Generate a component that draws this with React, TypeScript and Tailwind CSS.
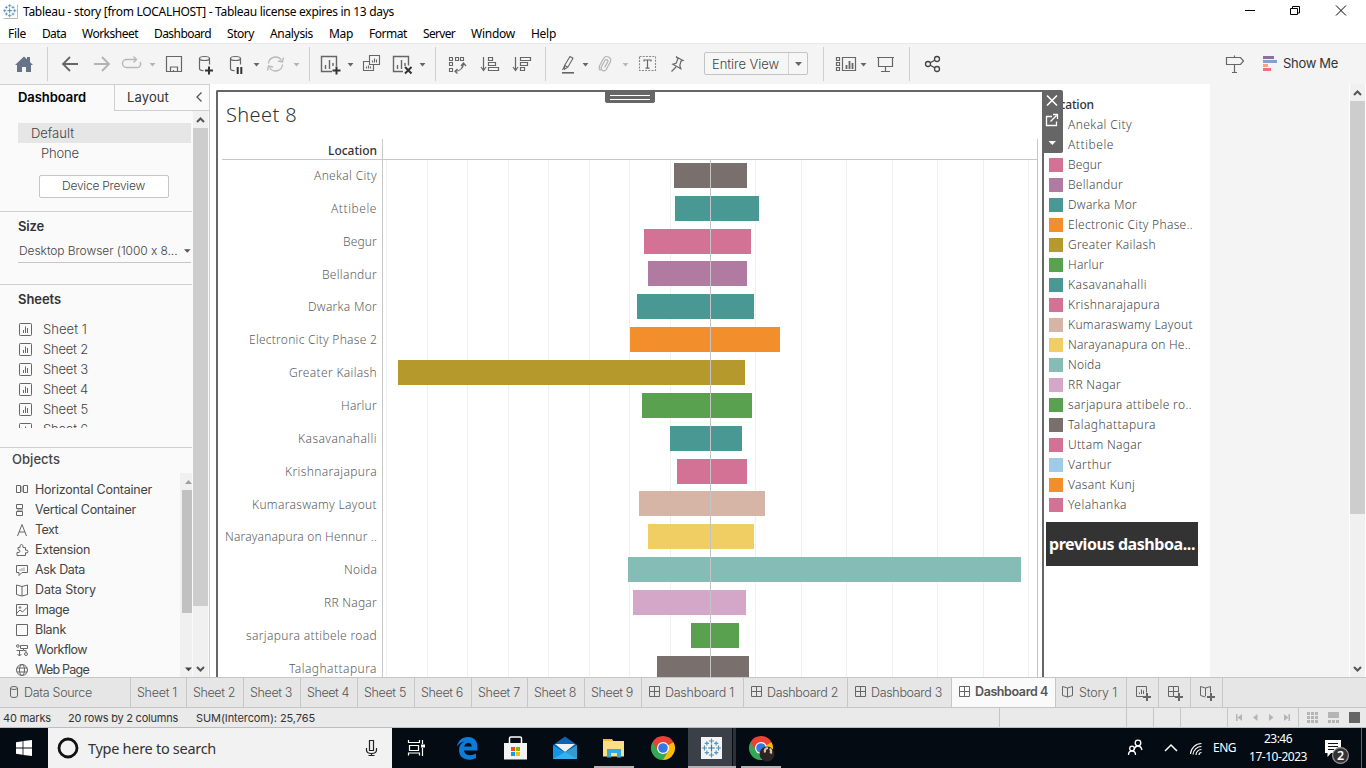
import React, { useLayoutEffect, useRef } from "react";

/* Text set to a known advance width by spreading the letter spacing. */
function Fit({ w, className = "", children }: { w: number; className?: string; children: string }) {
  const ref = useRef<HTMLSpanElement>(null);
  useLayoutEffect(() => {
    const el = ref.current;
    if (!el) return;
    el.style.letterSpacing = "0px";
    const natural = el.getBoundingClientRect().width;
    el.style.letterSpacing = `${(w - natural) / children.length}px`;
  }, [w, children]);
  return (
    <span ref={ref} className={`inline-block shrink-0 whitespace-pre ${className}`}>
      {children}
    </span>
  );
}

/* One strip cell: spans x1..x2 of a bar that starts at y and is h tall. */
function Cell({ x1, x2, y, h, children }: { x1: number; x2: number; y: number; h: number; children?: React.ReactNode }) {
  return (
    <svg className="block shrink-0" width={x2 - x1} height={h} viewBox={`${x1} ${y} ${x2 - x1} ${h}`} fill="none" stroke="#666" strokeWidth="1.4">
      {children}
    </svg>
  );
}

const Tool = (p: { x1: number; x2: number; children?: React.ReactNode }) => (
  <Cell x1={p.x1} x2={p.x2} y={44} h={40}>{p.children}</Cell>
);
const Caret = ({ x, y = 63, c = "#666" }: { x: number; y?: number; c?: string }) => (
  <path d={`M${x - 3} ${y}h6l-3 3.4z`} fill={c} stroke="none" />
);
const Sep = ({ x }: { x: number }) => <path d={`M${x + 0.5} 47V81`} stroke="#cfcfcf" strokeWidth="1" />;

const menus: [string, number][] = [
  ["File", 18], ["Data", 24], ["Worksheet", 56], ["Dashboard", 57], ["Story", 27], ["Analysis", 43],
  ["Map", 24], ["Format", 38], ["Server", 32], ["Window", 44], ["Help", 25],
];

function TableauMark({ x, y, s }: { x: number; y: number; s: number }) {
  const pts = [[0, 0, 2.6], [0, -5.4, 1.9], [0, 5.4, 1.9], [-5.4, 0, 1.9], [5.4, 0, 1.9], [-3.6, -3.6, 1.6], [3.6, -3.6, 1.6], [-3.6, 3.6, 1.6], [3.6, 3.6, 1.6]];
  return (
    <g transform={`translate(${x} ${y}) scale(${s})`} stroke="#2f7ba8" strokeWidth=".9">
      {pts.map(([a, b, r], i) => <path key={i} d={`M${a - r} ${b}h${2 * r}M${a} ${b - r}v${2 * r}`} opacity={i === 0 ? 1 : 0.8} />)}
    </g>
  );
}

function TopBars() {
  return (
    <>
      <div className="flex h-[22px] items-center bg-white">
        <Cell x1={0} x2={23} y={0} h={22}>
          <path d="M3.5 18.5h14V4.5" stroke="#bbb" strokeWidth="1" />
          <TableauMark x={9.7} y={10.7} s={0.92} />
        </Cell>
        <Fit w={371} className="pt-px text-[12px] leading-[22px] text-black">Tableau - story [from LOCALHOST] - Tableau license expires in 13 days</Fit>
        <div className="flex-1" />
        <Cell x1={1236} x2={1366} y={0} h={22}>
          <path d="M1245 10.5h10M1290.5 8.5h7v6h-7zM1292.5 8V6.5h7v6.5h-2M1336 5.5l10 10M1346 5.5l-10 10" stroke="#000" strokeWidth="1" />
        </Cell>
      </div>
      <div className="flex h-[21px] items-center gap-4 bg-white pl-2 pt-[3px] text-[12px] leading-[20px] text-black">
        {menus.map(([m, w]) => <Fit key={m} w={w}>{m}</Fit>)}
      </div>
      <div className="flex h-[41px] border-t border-[#e9e9e9] bg-[#f4f4f4] font-['Inter',sans-serif]">
        <Tool x1={0} x2={56}>
          <path d="M15 65l9-8.5 3 2.8V57h3v5l3 3h-2v7h-5v-5h-4v5h-5v-7z" fill="#677487" stroke="none" />
          <Sep x={47} />
        </Tool>
        <Tool x1={56} x2={160}>
          <path d="M78 64H63M70 57l-7 7 7 7" strokeWidth="1.8" />
          <path d="M94 64h15M102 57l7 7-7 7" stroke="#b3b3b3" strokeWidth="1.8" />
          <path d="M127 59.500h-.500a3.500 3.500 0 0 0 0 8h10a3.500 3.500 0 0 0 3.500-5.500M127 59.500h9.500M133.500 56.500l3 3-3 3" stroke="#b8b8b8" />
          <Caret x={152.500} c="#b3b3b3" />
        </Tool>
        <Tool x1={160} x2={309}>
          <path d="M166.500 56.500h15v15h-15zM170.500 71v-4h7v4M173.500 70v1.500" strokeWidth="1.200" />
          <g strokeWidth="1.200">
            <ellipse cx="204.500" cy="58.500" rx="5" ry="2" /><path d="M199.500 58.500v10q0 2 4 2.200M209.500 58.500v6" />
            <path d="M205 70.500h8M209 66.500v8" stroke="#333" strokeWidth="2" />
            <ellipse cx="235.500" cy="58.500" rx="5" ry="2" /><path d="M230.500 58.500v10q0 2 4 2.200M240.500 58.500v6" />
            <path d="M237.700 67v7M241.300 67v7" stroke="#333" strokeWidth="2" />
          </g>
          <Caret x={256.500} />
          <path d="M268.500 63.500a7 7 0 0 1 13-3M282.500 64.500a7 7 0 0 1-13 3M283.500 57.500l-1 4.500-4.500-1M267.500 70.500l1-4.500 4.500 1" stroke="#b8b8b8" strokeWidth="1.300" />
          <Caret x={296.500} c="#b3b3b3" />
        </Tool>
        <Tool x1={309} x2={441}>
          <Sep x={309} />
          <path d="M332 71.500h-10.500v-15h15v9.500M325.500 69v-4M329.500 69v-9M333 66v-3" />
          <path d="M332.500 70.500h8M336.500 66.500v8" stroke="#333" strokeWidth="2" />
          <Caret x={350.500} />
          <path d="M369.500 55.500h10v9h-10zM369 61.500h-5.500v9h10v-6M372.500 62.500v-2M374.500 62.500v-4M376.500 62.500v-3M366.500 68.500v-2M368.500 68.500v-3M370.500 68.500v-2" strokeWidth="1.100" />
          <path d="M403 71.500h-9.500v-15h15v9M397.500 69v-4M401.500 69v-9M405 66v-3" />
          <path d="M405 67l6.500 6.500M411.500 67l-6.500 6.500" stroke="#333" strokeWidth="2" />
          <Caret x={422.500} /><Sep x={435} />
        </Tool>
        <Tool x1={441} x2={551}>
          <path d="M449.500 57.500h3v3h-3zM455.500 57.500h3v3h-3zM460.500 57.500h3v3h-3zM449.500 62.500h3v3h-3zM449.500 68.500h3v3h-3z" strokeWidth="1.100" />
          <path d="M455 71.500q8-1 8.500-8M461 66l2.500-3 2.500 3M457.500 69l-2.500 2.500 2.500 2" strokeWidth="1.200" />
          <path d="M483.500 57v13M481 67l2.500 3.500L486 67M488.500 57.500h4v3h-4zM488.500 62.500h7v3h-7zM488.500 67.500h10v3h-10z" strokeWidth="1.200" />
          <path d="M515.500 57v13M513 67l2.500 3.500L518 67M520.500 57.500h10v3h-10zM520.500 62.500h7v3h-7zM520.500 67.500h4v3h-4z" strokeWidth="1.200" />
          <Sep x={545} />
        </Tool>
        <Tool x1={551} x2={704}>
          <path d="M564.500 65.500l5.500-9 3 1.700-5.200 9-3.300 2zM562.500 70l2-4M565 65.500l3 2" strokeWidth="1.100" /><path d="M562 72.800h12" strokeWidth="1.600" />
          <Caret x={585.500} />
          <path d="M599.500 66l4-7.500q1.800-3 5-1.500t1.800 5l-4 7.500q-1.400 2.200-3.700 1t-1.200-3.500l3.500-6.500q.8-1.300 2.200-.6t.6 2l-3 5.500M599.500 66q-1 3 1 4.500" stroke="#b3b3b3" strokeWidth="1.200" />
          <Caret x={625.500} c="#b8b8b8" />
          <path d="M639.500 56.500h16v14h-16z" strokeDasharray="2 1.200" strokeWidth="1.100" stroke="#888" />
          <path d="M644 61.500v-1.500h7v1.500M647.500 60v8M645.500 68.200h4" strokeWidth="1.200" />
          <path d="M676 56.800l7 3.700-2 .5-1.200 4.500 1 3.200-8-4.500 3.300-1 1.900-4.700zM676 67l-4.500 4.500" strokeWidth="1.200" />
        </Tool>
        <div className="mt-2 flex h-[23px] w-[104px] shrink-0 rounded-[2px] border border-[#c3c3c3] bg-[#f6f6f6]">
          <div className="flex w-[84px] items-center border-r border-[#d4d4d4] pl-[7px]">
            <Fit w={67} className="text-[13px] font-light leading-[20px] text-[#444]">Entire View</Fit>
          </div>
          <svg width="18" height="21" viewBox="0 0 18 21"><path d="M6 9h7l-3.500 4z" fill="#666" /></svg>
        </div>
        <Tool x1={808} x2={950}>
          <Sep x={823} />
          <path d="M836.500 57.500h3v3h-3zM836.500 62.500h3v3h-3zM836.500 67.500h3v3h-3zM842.500 57.500h13v13h-13z" strokeWidth="1.200" />
          <path d="M846.500 69v-4M849.500 69v-8M852.500 69v-6" strokeWidth="1.800" />
          <Caret x={863.500} />
          <path d="M877 57.500h17M878.500 58v8.500h14V58M885.500 67v4M881 71.500h9" strokeWidth="1.200" />
          <Sep x={909} />
          <g stroke="#444" strokeWidth="1.300"><circle cx="928" cy="64" r="2.500" /><circle cx="937" cy="59" r="2.500" /><circle cx="937" cy="69" r="2.500" /><path d="M930.200 62.800l4.600-2.600M930.200 65.200l4.600 2.600" /></g>
        </Tool>
        <div className="flex-1" />
        <Tool x1={1216} x2={1283}>
          <path d="M1226.500 57.500h14l3 3.500-3 3.500h-14zM1234.500 55.500v2M1234.500 64.500v8M1232 72.500h5" strokeWidth="1.200" />
          <g stroke="none"><path fill="#8c6f9c" d="M1263 56h11v3h-11z" /><path fill="#7fa3cd" d="M1263 60h14v3h-14z" /><path fill="#f1a57d" d="M1263 64h5v3h-5z" /><path fill="#f96a7a" d="M1263 68h8v3h-8z" /></g>
        </Tool>
        <Fit w={55} className="mr-[28px] text-[13px] leading-[38px] text-[#333]">Show Me</Fit>
      </div>
    </>
  );
}

const objects: [string, number, React.ReactNode][] = [
  ["Horizontal Container", 117, <><path d="M.5 1.500h4v7h-4zM7.500 1.500h4v7h-4z" /><path d="M5 2h2v6H5z" fill="#bbb" stroke="none" /></>],
  ["Vertical Container", 101, <><path d="M.5.500h6v4h-6zM.5 7.500h6v4h-6z" /><path d="M1 5h6v2H1z" fill="#bbb" stroke="none" /></>],
  ["Text", 23, <path d="M1.500 12L6 .5 10.500 12M3 8h6" />],
  ["Extension", 55, <path d="M3.500 11.500h6V8.800q2.500.8 2.500-1.300T9.500 6.200V3.500H7Q7.500.5 5.500.5T4 3.500H2v2.200q2-.2 2 1.500T1 8.500v3z" />],
  ["Ask Data", 50, <><path d="M.5 1.500h11v7H6l-3 3v-3H.5z" /><path d="M4 7V5M6 7V4M8 7V3.500" stroke="#999" /></>],
  ["Data Story", 61, <path d="M6 2.500L.5 1v9.500L6 12l5.500-1.500V1L6 2.500V12" />],
  ["Image", 34, <><path d="M.5.500h11v11H.5zM1 9l3-3 2.500 2L11 3.500" /><circle cx="4" cy="3.500" r=".8" /></>],
  ["Blank", 31, <path d="M.5.500h11v11H.5z" />],
  ["Workflow", 52, <><circle cx="1.800" cy="2" r="1.300" /><circle cx="10" cy="10" r="1.500" /><path d="M4.500 1.500h7v3h-7zM.5 6.500h7v-2M3.500 6.500v5.500M1.500 10l2 2 2-2M10 8V6.500H8" /></>],
  ["Web Page", 54, <><circle cx="6" cy="6" r="5.500" /><ellipse cx="6" cy="6" rx="2.500" ry="5.500" /><path d="M1 4h10M1 8h10" /></>],
];

function Sidebar() {
  return (
    <div className="flex h-full w-[210px] shrink-0 flex-col border-r border-t border-[#cfcfcf] bg-[#fafafa] font-['Inter',sans-serif] text-[#444]">
      <div className="flex h-[26px] shrink-0">
        <div className="w-[114px] pl-[18px] leading-[23px]"><Fit w={68} className="text-[13px] font-semibold leading-[23px] text-black">Dashboard</Fit></div>
        <div className="flex flex-1 items-center border-b border-l border-[#cfcfcf] pl-3">
          <Fit w={42} className="text-[13px] text-[#333]">Layout</Fit>
          <svg className="-mt-0.5 ml-[26px]" width="9" height="12" viewBox="0 0 9 12" fill="none" stroke="#555" strokeWidth="1.300"><path d="M6.500 1.500L2 6l4.500 4.500" /></svg>
        </div>
      </div>
      <div className="flex min-h-0 flex-1">
        <div className="flex w-[192px] flex-col overflow-hidden">
          <div className="ml-[18px] mt-3 h-5 w-[173px] shrink-0 bg-[#e6e6e6] pl-[13px] leading-[18px]"><Fit w={43} className="text-[13px] font-light leading-[18px]">Default</Fit></div>
          <div className="h-5 shrink-0 pl-[41px] leading-[18px]"><Fit w={38} className="text-[13px] font-light leading-[18px]">Phone</Fit></div>
          <div className="ml-[39px] mt-3 flex h-[23px] w-[130px] shrink-0 rounded-[2px] border border-[#c6c6c6] bg-white pl-[22px]"><Fit w={83} className="text-[12px] font-light leading-[20px]">Device Preview</Fit></div>
          <div className="mt-[13px] h-[73px] shrink-0 border-t border-[#cfcfcf] pl-[18px]">
            <div className="mt-1 flex h-[22px]"><Fit w={26} className="text-[13px] font-semibold leading-[21px] text-[#333]">Size</Fit></div>
            <div className="mt-0.5 flex h-[23px] w-[173px] items-center border-b border-[#c6c6c6] pl-px">
              <Fit w={160} className="text-[12px] font-light">Desktop Browser (1000 x 8...</Fit>
              <svg className="ml-[6px]" width="8" height="6" viewBox="0 0 8 6"><path d="M0 1h7L3.500 4.800z" fill="#555" /></svg>
            </div>
          </div>
          <div className="h-[163px] shrink-0 border-t border-[#cfcfcf] pl-[18px]">
            <div className="mt-1 flex h-[21px]"><Fit w={43} className="text-[13px] font-semibold leading-[21px] text-[#333]">Sheets</Fit></div>
            <div className="mt-2 h-[110px] overflow-hidden pt-0.5">
              {[1, 2, 3, 4, 5, 6].map((n) => (
                <div key={n} className="flex h-5 items-center pl-px">
                  <svg className="mb-px" width="24" height="14" viewBox="0 0 24 14" fill="none" stroke="#666"><rect x=".5" y=".5" width="12" height="12" rx=".8" /><path d="M4.500 10V7M6.500 10V3.500M8.500 10V5" /></svg>
                  <Fit w={n === 1 ? 44 : 45} className="text-[13px] font-light">{`Sheet ${n}`}</Fit>
                </div>
              ))}
            </div>
          </div>
          <div className="flex min-h-0 flex-1 flex-col border-t border-[#cfcfcf]">
            <div className="mt-px flex h-[22px] shrink-0 pl-3"><Fit w={48} className="text-[13px] font-medium leading-[21px]">Objects</Fit></div>
            <div className="mt-0.5 flex min-h-0 flex-1 overflow-hidden">
              <div className="w-[180px] pt-[7px]">
                {objects.map(([name, w, icon]) => (
                  <div key={name} className="flex h-5 items-center pl-4">
                    <svg className="mr-[6px] shrink-0 overflow-visible" width="13" height="13" viewBox="0 0 13 13" fill="none" stroke="#666" strokeWidth="1">{icon}</svg>
                    <Fit w={w} className="text-[12.500px] text-[#444]">{name}</Fit>
                  </div>
                ))}
              </div>
              <svg width="12" height="204" viewBox="180 473 12 204"><path fill="#f0f0f0" d="M180 473h12v204h-12z" /><path fill="#c1c1c1" d="M182 490h10v123h-10z" /><path fill="#a0a0a0" d="M185 484l3.500-4 3.500 4z" /><path fill="#444" d="M185 667.500h7l-3.500 3.800z" /></svg>
            </div>
          </div>
        </div>
        <svg className="shrink-0" width="17" height="566" viewBox="192 111 17 566"><path fill="#f0f0f0" d="M193 111h15v566h-15z" /><path fill="#cdcdcd" d="M193 128h15v478h-15z" /><path d="M197 122l3.500-3.500 3.500 3.500M197 667l3.500 3.500 3.500-3.500" fill="none" stroke="#555" strokeWidth="2" /></svg>
      </div>
    </div>
  );
}

const rows: [string, number, number, number, string][] = [
  ["Anekal City", 63, 674, 747, "#79706e"], ["Attibele", 46, 675, 759, "#499894"], ["Begur", 34, 644, 751, "#d37295"],
  ["Bellandur", 55, 648, 747, "#b07aa1"], ["Dwarka Mor", 69, 637, 754, "#499894"], ["Electronic City Phase 2", 128, 630, 780, "#f28e2b"],
  ["Greater Kailash", 88, 398, 745, "#b6992d"], ["Harlur", 36, 642, 752, "#59a14f"], ["Kasavanahalli", 79, 670, 742, "#499894"],
  ["Krishnarajapura", 92, 677, 747, "#d37295"], ["Kumaraswamy Layout", 125, 639, 765, "#d7b5a6"], ["Narayanapura on Hennur ..", 152, 648, 754, "#f1ce63"],
  ["Noida", 33, 628, 1021, "#86bcb6"], ["RR Nagar", 53, 633, 746, "#d4a6c8"], ["sarjapura attibele road", 131, 691, 739, "#59a14f"],
  ["Talaghattapura", 88, 657, 749, "#79706e"],
];
const grid = [386, 427, 467, 508, 548, 589, 629, 670, 755, 801, 846, 892, 937, 983, 1028];

const legend: [string, number, string][] = [
  ["Anekal City", 64, ""], ["Attibele", 46, ""], ["Begur", 34, "bg-[#d37295]"], ["Bellandur", 55, "bg-[#b07aa1]"],
  ["Dwarka Mor", 69, "bg-[#499894]"], ["Electronic City Phase..", 125, "bg-[#f28e2b]"], ["Greater Kailash", 88, "bg-[#b6992d]"],
  ["Harlur", 36, "bg-[#59a14f]"], ["Kasavanahalli", 79, "bg-[#499894]"], ["Krishnarajapura", 92, "bg-[#d37295]"],
  ["Kumaraswamy Layout", 125, "bg-[#d7b5a6]"], ["Narayanapura on He..", 123, "bg-[#f1ce63]"], ["Noida", 33, "bg-[#86bcb6]"],
  ["RR Nagar", 53, "bg-[#d4a6c8]"], ["sarjapura attibele ro..", 124, "bg-[#59a14f]"], ["Talaghattapura", 88, "bg-[#79706e]"],
  ["Uttam Nagar", 74, "bg-[#d37295]"], ["Varthur", 44, "bg-[#a0cbe8]"], ["Vasant Kunj", 67, "bg-[#f28e2b]"], ["Yelahanka", 59, "bg-[#d37295]"],
];

function Canvas() {
  return (
    <div className="flex h-full w-[1000px] shrink-0 bg-white pl-[6px] pt-[6px]">
      <div className="relative flex w-[828px] shrink-0 flex-col rounded-t-[2px] border-x-2 border-t-2 border-[#666] pl-1">
        <div className="h-[47px] shrink-0 pl-1 leading-[46px]"><Fit w={71} className="text-[20px] font-light text-[#333]">Sheet 8</Fit></div>
        <div className="flex h-[21px] w-[816px] shrink-0 border-b border-[#c8c8c8]">
          <div className="flex w-[161px] justify-end border-r border-[#c8c8c8] pr-[5px]"><Fit w={49} className="text-[12px] font-medium leading-[23px] text-[#333]">Location</Fit></div>
          <div className="flex-1 border-r border-[#c8c8c8]" />
        </div>
        <div className="flex min-h-0 flex-1 overflow-hidden">
          <div className="w-[161px] shrink-0 border-r border-[#c8c8c8] pr-[5px]">
            {rows.map(([n, w]) => (
              <div key={n} className="flex h-[32.870px] items-center justify-end pb-[0.800px]"><Fit w={w} className="text-[12px] font-light leading-[20px] text-[#5c5c5c]">{n}</Fit></div>
            ))}
          </div>
          <svg className="shrink-0" width="655" height="517" viewBox="383 160 655 517" shapeRendering="crispEdges">
            {grid.map((x) => <path key={x} fill="#f0f0f0" d={`M${x} 160h1v517h-1z`} />)}
            {rows.map(([n, , a, b, c], i) => <rect key={n} x={a} y={Math.floor(163.3 + i * 32.86)} width={b - a} height="25" fill={c} />)}
            <path fill="#c4c4c4" d="M710 160h1v517h-1zM1037 160h1v517h-1z" />
          </svg>
        </div>
        <svg className="absolute left-[387px] top-0" width="50" height="11" viewBox="0 0 50 11"><path d="M0 0h50v9.500l-1.500 1.500h-47L0 9.500z" fill="#666" /><path d="M5 3h40v1H5zM5 7h40v1H5z" fill="#fff" /></svg>
        <svg className="absolute -right-[21px] -top-0.5 z-10" width="21" height="63" viewBox="1042 90 21 63" fill="none" stroke="#fff">
          <path d="M1042 90h19q2 0 2 2v59q0 2-2 2h-19z" fill="#666" stroke="none" />
          <path d="M1047 95.500l10 10M1057 95.500l-10 10" strokeWidth="1.600" />
          <path d="M1052 116.500h-5.500v9h10v-4M1050.500 121.500l6-6M1053 114.500h4.500v4.500" strokeWidth="1.300" />
          <path d="M1048.500 141h7.500l-3.700 4z" fill="#fff" stroke="none" />
        </svg>
      </div>
      <div className="flex w-[160px] flex-col pt-1">
        <div className="flex h-[21px] pl-[2px]"><Fit w={48} className="text-[12px] font-medium leading-[22px] text-[#333]">Location</Fit></div>
        {legend.map(([n, w, c]) => (
          <div key={n} className="flex h-5 items-center pl-[5px]">
            <div className={`mr-[5px] h-[14px] w-[14px] ${c}`} />
            <Fit w={w} className="text-[12px] font-light leading-[20px] text-[#444]">{n}</Fit>
          </div>
        ))}
        <div className="ml-0.5 mt-[7px] flex h-[44px] w-[152px] shrink-0 items-center bg-[#333] pl-[3px]">
          <Fit w={146} className="text-[16px] font-bold text-white">previous dashboa...</Fit>
        </div>
      </div>
    </div>
  );
}

const Grid4 = () => <path d="M.5.500h10v10H.5zM5.500.500v10M.5 5.500h10" />;
const Book = () => <path d="M5.500 2L.5.500v9l5 1.500 5-1.500v-9zV11" />;
const tabs: [string, number, number, string][] = [
  ["Sheet 1", 56, 40, ""], ["Sheet 2", 57, 42, ""], ["Sheet 3", 57, 42, ""], ["Sheet 4", 57, 42, ""], ["Sheet 5", 57, 42, ""],
  ["Sheet 6", 57, 42, ""], ["Sheet 7", 56, 42, ""], ["Sheet 8", 57, 42, ""], ["Sheet 9", 57, 42, ""],
  ["Dashboard 1", 102, 69, "d"], ["Dashboard 2", 104, 71, "d"], ["Dashboard 3", 104, 71, "d"], ["Dashboard 4", 104, 73, "a"], ["Story 1", 71, 38, "s"],
];

function Bottom() {
  return (
    <>
      <div className="flex h-[31px] shrink-0 border-y border-[#c6c6c6] bg-[#e6e6e6] font-['Inter',sans-serif] text-[12.500px] font-light leading-[28px] text-[#555]">
        <div className="flex w-[131px] items-center border-r border-[#c6c6c6] pl-[10px]">
          <svg className="mb-[2px] mr-[6px]" width="8" height="12" viewBox="0 0 8 12" fill="none" stroke="#666"><ellipse cx="4" cy="2" rx="3.500" ry="1.500" /><path d="M.5 2v8q0 1.500 3.500 1.500T7.500 10V2" /></svg>
          <Fit w={68}>Data Source</Fit>
        </div>
        {tabs.map(([n, w, tw, k]) => (
          <div key={n} style={{ width: w }} className={`flex shrink-0 items-center border-r border-[#c6c6c6] ${k === "d" || k === "a" ? "pl-[7px]" : "pl-[6px]"} ${k === "a" ? "bg-[#fafafa] pb-px font-semibold" : ""}`}>
            {k && <svg className={k === "s" ? "mb-0.5 mr-[6px]" : "mb-px mr-[5px]"} width="11" height="12" viewBox="0 0 11 12" fill="none" stroke="#666">{k === "s" ? <Book /> : <Grid4 />}</svg>}
            <Fit w={tw}>{n}</Fit>
          </div>
        ))}
        {[0, 1, 2].map((i) => (
          <div key={i} className="flex w-8 shrink-0 items-center border-r border-[#c6c6c6] pl-[9px]">
            <svg width="16" height="16" viewBox="0 0 16 16" fill="none" stroke="#666">
              {i === 0 && <path d="M7 11.500H.5v-10h10v6M3.500 9V7.500M5.500 9V4.500M7.500 9V5.500" />}
              {i === 1 && <path d="M7 11.500H.5v-10h10v6M5.500 1.500v10M.5 6.500h10" />}
              {i === 2 && <path d="M5.500 11V3L.5 1.500v9l5 1.500M5.500 3l5-1.500v6" />}
              <path d="M7 12h8M11 8v8" strokeWidth="2" />
            </svg>
          </div>
        ))}
      </div>
      <div className="flex h-[20px] shrink-0 items-center border-b border-[#bdbdbd] bg-[#eaeaea] pl-[3px] font-['Inter',sans-serif] text-[11px] text-[#333]">
        <Fit w={48} className="pt-[2px]">40 marks</Fit>
        <Fit w={110} className="ml-[17px] pt-[2px]">20 rows by 2 columns</Fit>
        <Fit w={119} className="ml-[18px] pt-[2px]">SUM(Intercom): 25,765</Fit>
        <div className="flex-1" />
        <Cell x1={990} x2={1366} y={708} h={20}>
          <path d="M999.500 708v20M1126.500 708v20M1153.500 708v20M1180.500 708v20M1227.500 708v20M1298.500 708v20" stroke="#c6c6c6" strokeWidth="1" />
          <g fill="#b5b5b5" stroke="none"><path d="M1236 714h1.500v7h-1.500zM1242 714v7l-4.500-3.500zM1257.500 714v7l-4.500-3.500zM1269 714v7l4.500-3.500zM1284 714v7l4.500-3.500zM1288.500 714h1.500v7h-1.500z" />
            {[0, 1, 2].map((r) => [0, 1, 2].map((c) => <path key={`${r}${c}`} d={`M${1307 + c * 4} ${712 + r * 4}h3v3h-3z`} />))}
            <path d="M1328 712h11v6h-11zM1328 720h3v3h-3zM1332 720h3v3h-3zM1336 720h3v3h-3z" />
            <path d="M1349 712h11v11h-11z" fill="#666" />
          </g>
        </Cell>
      </div>
    </>
  );
}

const Task = (p: { x1: number; x2: number; children?: React.ReactNode }) => <Cell x1={p.x1} x2={p.x2} y={728} h={40}>{p.children}</Cell>;

function Chrome({ x }: { x: number }) {
  return (
    <g transform={`translate(${x} 748)`} stroke="none">
      <path fill="#ea4335" d="M0 0L-10.400-6A12 12 0 0 1 10.400-6z" />
      <path fill="#fbbc05" d="M0 0L10.400-6A12 12 0 0 1 0 12z" />
      <path fill="#34a853" d="M0 0L0 12A12 12 0 0 1-10.400-6z" />
      <path fill="#ea4335" d="M-10.400-6L-5 3L0-5.500H10.700L10.400-6z" />
      <path fill="#34a853" d="M0 12L5.200 3L0 5.500L-5 3z" />
      <circle r="6" fill="#fff" /><circle r="4.800" fill="#3578e5" />
    </g>
  );
}

function Taskbar() {
  return (
    <div className="flex h-10 shrink-0 bg-[#040b13]">
      <Task x1={0} x2={48}><path d="M16 742.200l6.600-.9v6.300H16zM23.400 741.100l8.600-1.200v7.700h-8.600zM16 748.400h6.600v6.300l-6.600-.9zM23.400 748.400H32v7.700l-8.600-1.200z" fill="#fff" stroke="none" /></Task>
      <div className="flex w-[344px] items-center bg-[#f2f2f2]">
        <Task x1={48} x2={88}><circle cx="68" cy="748" r="9" stroke="#111" strokeWidth="2.800" /></Task>
        <Fit w={128} className="pb-px text-[14.500px] leading-[30px] text-[#333]">Type here to search</Fit>
        <div className="flex-1" />
        <Task x1={356} x2={392}><path d="M369.500 740.500h4v10h-4zM366.500 748v2q0 3.500 5 3.500t5-3.500v-2M371.500 753.500v2M368.500 755.500h6" stroke="#222" strokeWidth="1.200" /></Task>
      </div>
      <Task x1={392} x2={440}><path d="M408.500 740v2.500h11V740M408.500 755.500v-2.500h11v2.500M409.500 745.500h9v5h-9zM422.500 740v4M422.500 748v8" stroke="#fff" strokeWidth="1.200" /><path d="M421 744.500h4v3h-4z" fill="#fff" stroke="none" /></Task>
      <Task x1={440} x2={496}><path fill="#0c7cdb" stroke="none" fillRule="evenodd" d="M457 747c.6-6 5-10 11-10 6.500 0 9.500 4.500 9.500 10v3.500H464c.5 5 7 6 12 3v4.500c-8 4-17 1-17-8 0-4 2-7 5.500-8.500-4 .5-6.500 3-7.500 5.500zM464.200 746.500h7.500c0-5-6.500-5-7.500 0z" /></Task>
      <Task x1={496} x2={544}>
        <path d="M509.500 744v-5.500q0-1.500 1.500-1.500h9q1.500 0 1.500 1.500v5.500" stroke="#fff" strokeWidth="1.500" /><path d="M504 743h23v16.500h-23z" fill="#f3f3f3" stroke="none" />
        <g stroke="none"><path fill="#f25022" d="M511 747h4v4h-4z" /><path fill="#7fba00" d="M516 747h4v4h-4z" /><path fill="#00a4ef" d="M511 752h4v4h-4z" /><path fill="#ffb900" d="M516 752h4v4h-4z" /></g>
      </Task>
      <Task x1={544} x2={592}><g stroke="none"><path fill="#0b64b5" d="M553 745l12-8.500 12 8.500-12 7z" /><path fill="#f2f2f2" d="M555 744h20l-10 8z" /><path fill="#1593e6" d="M553 745v14h24z" /><path fill="#35b9f5" d="M577 745v14h-24z" opacity=".85" /></g></Task>
      <Task x1={592} x2={640}><g stroke="none"><path fill="#f6bd2e" d="M603 739h9l2 3h-11z" /><path fill="#fbdf85" d="M603 741h21v15.500h-21z" /><path fill="#36a9de" d="M607 749h14v8.500h-4V753h-6v4.500h-4z" /><path fill="#b8b0b2" d="M594 766h40v2h-40z" /></g></Task>
      <Task x1={640} x2={688}><Chrome x={663} /></Task>
      <Task x1={688} x2={738}><path fill="#3b4048" stroke="none" d="M688 728h44v40h-44z" /><path fill="#2c3138" stroke="none" d="M733 728h3v40h-3z" /><path fill="#f4f4f4" stroke="none" d="M701 737h21v22h-21z" /><TableauMark x={711.500} y={748} s={1.300} /><path fill="#b8b0b2" stroke="none" d="M688 766h48v2h-48z" /></Task>
      <Task x1={738} x2={786}><Chrome x={761} /><circle cx="767" cy="754" r="7.500" fill="#2b2523" stroke="none" /><path d="M765 752.500q-1-4 3-4.500M770.500 753.500q1.500-2-.5-5" stroke="#e0c3a4" strokeWidth="2.200" /><path fill="#b8b0b2" stroke="none" d="M741 766h40v2h-40z" /></Task>
      <div className="flex-1" />
      <Task x1={1120} x2={1213}>
        <g stroke="#fff" strokeWidth="1.300"><circle cx="1138" cy="743" r="2.800" /><path d="M1134 750q1-4 4-4t4 4" /><circle cx="1132" cy="748.500" r="2.300" /><path d="M1128.500 755q0-4 3.500-4t3.500 4" />
          <path d="M1165 751l6-6 6 6" strokeWidth="1.500" />
          <path d="M1190.500 754a11 11 0 0 1 11-10.500M1193 754.500a8.500 8.500 0 0 1 8.500-8M1196 755a5.500 5.500 0 0 1 5.500-5.500M1199 755a2.500 2.500 0 0 1 2.500-2.500" strokeWidth="1.100" /></g>
      </Task>
      <Fit w={23} className="text-[12px] leading-[40px] text-white">ENG</Fit>
      <div className="ml-[13px] flex w-[58px] flex-col items-center pt-0.5 text-[12px] leading-[18px] text-white">
        <Fit w={28}>23:46</Fit>
        <Fit w={58}>17-10-2023</Fit>
      </div>
      <div className="relative">
        <Task x1={1307} x2={1366}>
          <path d="M1325 740h16v13h-10l-3.500 4v-4h-2.500z" fill="#fff" stroke="none" /><path d="M1328 743.500h10M1328 746.500h10M1328 749.500h6" stroke="#111" strokeWidth="1" />
          <circle cx="1340.500" cy="755.500" r="7.900" fill="#333" stroke="#999" strokeWidth="1.200" /><path d="M1361.500 728v40" stroke="#666" strokeWidth="1" />
        </Task>
        <span className="absolute left-[30px] top-[20px] text-[12.500px] font-semibold leading-[15px] text-white">2</span>
      </div>
    </div>
  );
}

export default function App() {
  return (
    <div className="flex h-[768px] w-[1366px] flex-col overflow-hidden bg-white font-['Noto_Sans',sans-serif]">
      <TopBars />
      <div className="flex h-[593px] shrink-0 overflow-hidden bg-[#f4f4f4]">
        <Sidebar />
        <Canvas />
        <div className="flex-1" />
        <svg className="shrink-0" width="17" height="593" viewBox="1349 84 17 593"><path fill="#fff" d="M1349 84h1v593h-1zM1365 84h1v593h-1z" /><path fill="#f0f0f0" d="M1350 84h15v593h-15z" /><path fill="#cdcdcd" d="M1350 101h15v413h-15z" /><path d="M1354 95l3.500-3.500 3.500 3.500M1354 667l3.500 3.500 3.500-3.500" fill="none" stroke="#555" strokeWidth="2" /></svg>
      </div>
      <Bottom />
      <Taskbar />
    </div>
  );
}
